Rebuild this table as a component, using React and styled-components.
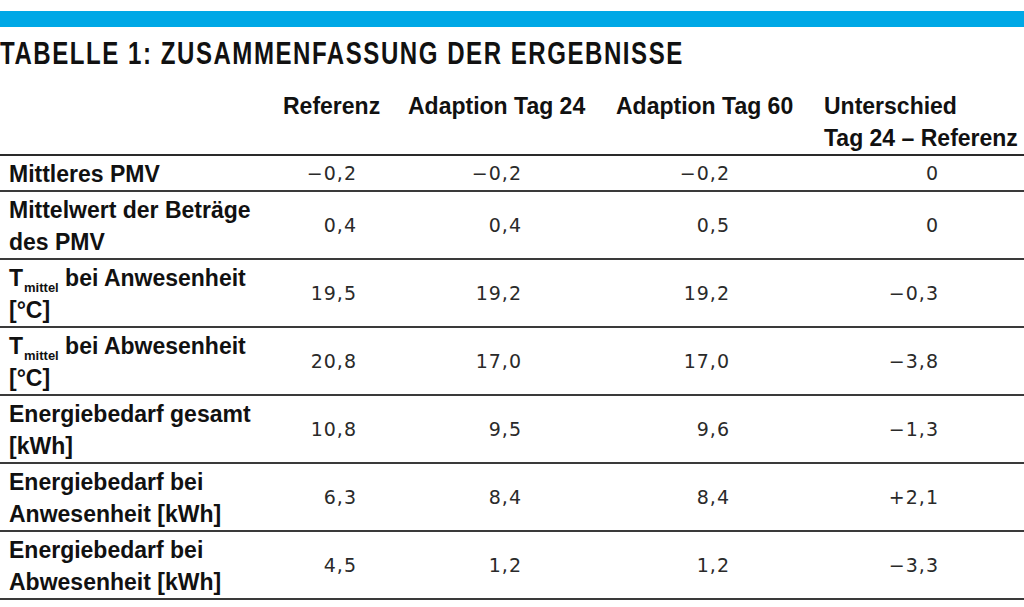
import React from 'react';
import styled, { createGlobalStyle } from 'styled-components';

const Global = createGlobalStyle`
  html, body { margin: 0; padding: 0; background: #fff; }
  body { width: 1024px; height: 607px; overflow: hidden; }
`;

const boldFont = `"Liberation Sans", Arial, sans-serif`;

const Page = styled.div`
  width: 1024px;
  padding-top: 11px;
`;

const AccentBar = styled.div`
  height: 16px;
  background: #00a8e6;
`;

const TitleWrap = styled.div`
  padding-top: 9px;
  height: 36px;
`;

const Title = styled.h1`
  display: inline-block;
  margin: 0;
  font-family: ${boldFont};
  font-weight: 700;
  font-size: 31px;
  letter-spacing: 2px;
  line-height: 36px;
  color: #111;
  white-space: nowrap;
  transform: scaleX(0.775);
  transform-origin: left center;
`;

const Table = styled.table`
  width: 1024px;
  border-collapse: collapse;
  table-layout: fixed;
`;

const HeadRow = styled.tr`
  border-bottom: 2px solid #2a2a2a;
`;

const Row = styled.tr`
  border-bottom: 2px solid #3a3a3a;
`;

const Th = styled.th`
  padding: 18px 0 0 8px;
  text-align: left;
  vertical-align: top;
  font-family: ${boldFont};
  font-weight: 700;
  font-size: 23px;
  line-height: 32px;
  color: #111;
  white-space: nowrap;
`;

const Label = styled.td`
  padding: 2px 0 0 9px;
  vertical-align: top;
  font-family: ${boldFont};
  font-weight: 700;
  font-size: 23px;
  line-height: 32px;
  color: #111;
  white-space: nowrap;
`;

const Sub = styled.sub`
  font-size: 13px;
  line-height: 0;
  vertical-align: -6px;
  margin-left: 1px;
`;

const Value = styled.td`
  padding: 0 ${(p) => p.$pr}px 0 0;
  text-align: right;
  vertical-align: middle;
  font-family: "DejaVu Sans", "Liberation Sans", sans-serif;
  font-weight: 400;
  font-size: 19px;
  letter-spacing: 1px;
  color: #2a2a2a;
  white-space: nowrap;
`;

const columns = [275, 125, 208, 208, 208];
const pads = [43, 86, 86, 85];

const rows = [
  { label: <>Mittleres PMV</>, values: ['\u22120,2', '\u22120,2', '\u22120,2', '0'] },
  { label: <>Mittelwert der Beträge<br />des PMV</>, values: ['0,4', '0,4', '0,5', '0'] },
  { label: <>T<Sub>mittel</Sub> bei Anwesenheit<br />[°C]</>, values: ['19,5', '19,2', '19,2', '\u22120,3'] },
  { label: <>T<Sub>mittel</Sub> bei Abwesenheit<br />[°C]</>, values: ['20,8', '17,0', '17,0', '\u22123,8'] },
  { label: <>Energiebedarf gesamt<br />[kWh]</>, values: ['10,8', '9,5', '9,6', '\u22121,3'] },
  { label: <>Energiebedarf bei<br />Anwesenheit [kWh]</>, values: ['6,3', '8,4', '8,4', '+2,1'] },
  { label: <>Energiebedarf bei<br />Abwesenheit [kWh]</>, values: ['4,5', '1,2', '1,2', '\u22123,3'] },
];

export default function App() {
  return (
    <Page>
      <Global />
      <AccentBar />
      <TitleWrap>
        <Title>TABELLE 1: ZUSAMMENFASSUNG DER ERGEBNISSE</Title>
      </TitleWrap>
      <Table>
        <colgroup>
          {columns.map((w, i) => (
            <col key={i} style={{ width: w }} />
          ))}
        </colgroup>
        <thead>
          <HeadRow>
            <Th />
            <Th>Referenz</Th>
            <Th>Adaption Tag 24</Th>
            <Th>Adaption Tag 60</Th>
            <Th>
              Unterschied
              <br />
              Tag 24 – Referenz
            </Th>
          </HeadRow>
        </thead>
        <tbody>
          {rows.map((r, i) => (
            <Row key={i}>
              <Label>{r.label}</Label>
              {r.values.map((v, j) => (
                <Value key={j} $pr={pads[j]}>
                  {v}
                </Value>
              ))}
            </Row>
          ))}
        </tbody>
      </Table>
    </Page>
  );
}
